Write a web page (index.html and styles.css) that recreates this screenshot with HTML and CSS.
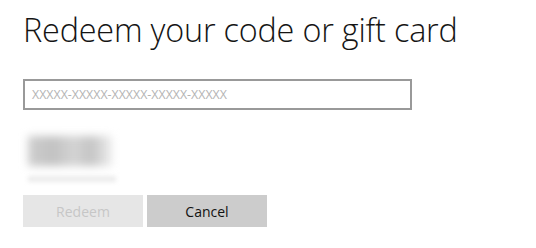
FILE: index.html
```html
<!DOCTYPE html>
<html>
<head>
<meta charset="utf-8">
<link rel="stylesheet" href="styles.css">
</head>
<body>
<div class="page">
  <h1 class="title">Redeem your code or gift card</h1>
  <div class="field"><span class="placeholder">XXXXX-XXXXX-XXXXX-XXXXX-XXXXX</span></div>
  <div class="captcha">
    <div class="blob"></div>
    <div class="strip"></div>
  </div>
  <div class="actions">
    <div class="btn btn-disabled">Redeem</div>
    <div class="btn btn-cancel">Cancel</div>
  </div>
</div>
</body>
</html>
```
FILE: styles.css
```css
html, body { margin: 0; padding: 0; background: #fff; }
.page {
  padding: 9px 0 0 23px;
  font-family: "Open Sans", "Liberation Sans", sans-serif;
}
.title {
  margin: 0;
  font-size: 32.4px;
  font-weight: 300;
  color: #151515;
  line-height: 40px;
  letter-spacing: -0.2px;
}
.field {
  margin-top: 30px;
  width: 378px;
  height: 27px;
  border: 2px solid #999;
  display: flex;
  align-items: center;
  padding-left: 7px;
  box-sizing: content-box;
}
.placeholder {
  font-size: 12.4px;
  color: #b4b4b4;
}
.captcha {
  margin: 26px 0 0 5px;
  width: 92px;
  height: 48px;
}
.blob {
  width: 84px;
  height: 30px;
  background: linear-gradient(90deg, #cdcdcd 0%, #c2c2c2 30%, #d4d4d4 55%, #c4c4c4 75%, #eee 100%);
  filter: blur(4px);
}
.strip {
  margin-top: 10px;
  width: 88px;
  height: 6px;
  background: #ececec;
  filter: blur(2px);
}
.actions {
  margin-top: 11px;
  display: flex;
  gap: 4px;
}
.btn {
  width: 120px;
  height: 32px;
  display: flex;
  align-items: center;
  justify-content: center;
  font-size: 14px;
}
.btn-disabled {
  background: #e6e6e6;
  color: #c6c6c6;
}
.btn-cancel {
  background: #cccccc;
  color: #111;
}
```
